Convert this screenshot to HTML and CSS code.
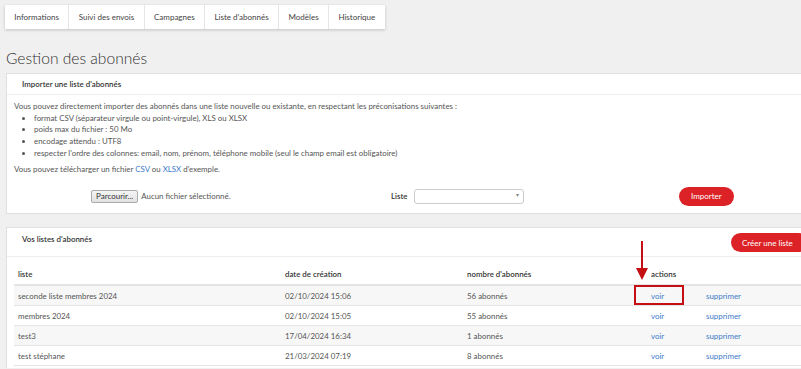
FILE: index.html
```html
<!DOCTYPE html>
<html lang="fr">
<head>
    <meta charset="UTF-8">
    <meta name="viewport" content="width=device-width, initial-scale=1.0">
    <title>Gestion des abonnés</title>
    <link rel="stylesheet" href="styles.css">
</head>
<body>
    <nav class="tabs">
        <a class="tab" href="#">Informations</a>
        <a class="tab" href="#">Suivi des envois</a>
        <a class="tab" href="#">Campagnes</a>
        <a class="tab" href="#">Liste d'abonnés</a>
        <a class="tab" href="#">Modèles</a>
        <a class="tab" href="#">Historique</a>
    </nav>

    <h1>Gestion des abonnés</h1>

    <div class="panel">
        <div class="panel-heading">Importer une liste d'abonnés</div>
        <div class="panel-body">
            <p class="intro">Vous pouvez directement importer des abonnés dans une liste nouvelle ou existante, en respectant les préconisations suivantes :</p>
            <ul class="rules">
                <li>format CSV (séparateur virgule ou point-virgule), XLS ou XLSX</li>
                <li>poids max du fichier : 50 Mo</li>
                <li>encodage attendu : UTF8</li>
                <li>respecter l'ordre des colonnes: email, nom, prénom, téléphone mobile (seul le champ email est obligatoire)</li>
            </ul>
            <p class="sample">Vous pouvez télécharger un fichier <a href="#">CSV</a> ou <a href="#">XLSX</a> d'exemple.</p>

            <form class="import-row">
                <div class="file-field">
                    <button type="button" class="file-btn">Parcourir...</button>
                    <span class="file-name">Aucun fichier sélectionné.</span>
                </div>
                <div class="list-field">
                    <label for="liste">Liste</label>
                    <div class="select-box" id="liste"><span class="caret">▾</span></div>
                </div>
                <button type="submit" class="btn-red">Importer</button>
            </form>
        </div>
    </div>

    <div class="panel panel-lists">
        <div class="panel-heading lists-heading">
            <span>Vos listes d'abonnés</span>
            <button type="button" class="btn-red btn-create">Créer une liste</button>
        </div>
        <table class="lists">
            <thead>
                <tr>
                    <th class="col-name">liste</th>
                    <th class="col-date">date de création</th>
                    <th class="col-count">nombre d'abonnés</th>
                    <th colspan="2">actions</th>
                </tr>
            </thead>
            <tbody>
                <tr>
                    <td>seconde liste membres 2024</td>
                    <td>02/10/2024 15:06</td>
                    <td>56 abonnés</td>
                    <td class="col-see"><a href="#">voir</a></td>
                    <td><a href="#">supprimer</a></td>
                </tr>
                <tr>
                    <td>membres 2024</td>
                    <td>02/10/2024 15:05</td>
                    <td>55 abonnés</td>
                    <td class="col-see"><a href="#">voir</a></td>
                    <td><a href="#">supprimer</a></td>
                </tr>
                <tr>
                    <td>test3</td>
                    <td>17/04/2024 16:34</td>
                    <td>1 abonnés</td>
                    <td class="col-see"><a href="#">voir</a></td>
                    <td><a href="#">supprimer</a></td>
                </tr>
                <tr>
                    <td>test stéphane</td>
                    <td>21/03/2024 07:19</td>
                    <td>8 abonnés</td>
                    <td class="col-see"><a href="#">voir</a></td>
                    <td><a href="#">supprimer</a></td>
                </tr>
            </tbody>
        </table>
    </div>

    <!-- annotation: arrow pointing at the first "voir" link -->
    <div class="mark-arrow"></div>
    <div class="mark-box"></div>
</body>
</html>
```

FILE: styles.css
```css
html {
    overflow: hidden;
}
body {
    font-family: Lato, "Open Sans", sans-serif;
    font-size: 7.9px;
    color: #555;
    margin: 0;
    padding: 5px 0 0 6px;
    background-color: #f0f0f0;
    position: relative;
    height: 369px;
    box-sizing: border-box;
    overflow: hidden;
}
a {
    color: #3d7cc9;
    text-decoration: none;
}
.tabs {
    display: inline-flex;
    margin-left: -1px;
    background: white;
    box-shadow: 0 1px 3px rgba(0,0,0,0.2);
}
.tab {
    height: 24px;
    line-height: 24px;
    padding: 0 9.5px 0 9.3px;
    font-size: 8px;
    color: #444;
    border-right: 1px solid #e6e6e6;
}
.tab:last-child {
    border-right: none;
}
h1 {
    font-size: 15.6px;
    font-weight: 300;
    color: #333;
    margin: 19px 0 0 0;
    line-height: 20px;
    height: 20px;
}
.panel {
    background: white;
    border: 1px solid #e0e0e0;
    border-right: none;
    margin-top: 5px;
}
.panel-heading {
    height: 20px;
    line-height: 20px;
    padding-left: 15px;
    color: #333;
    font-weight: 600;
    border-bottom: 1px solid #eee;
}
.panel-body {
    padding: 6px 8px 7px 7px;
}
.intro, .sample {
    margin: 0;
    line-height: 11.7px;
}
.rules {
    margin: 0;
    padding-left: 20px;
    line-height: 11.7px;
}
.rules li {
    height: 11.7px;
}
.sample {
    margin-top: 5px;
}
.import-row {
    display: flex;
    align-items: center;
    height: 20px;
    margin-top: 10px;
    padding-left: 77px;
}
.file-field {
    width: 300px;
    display: flex;
    align-items: center;
}
.file-btn {
    font-family: inherit;
    font-size: 8px;
    color: #333;
    height: 13px;
    padding: 0 4px;
    border: 1px solid #aaa;
    border-radius: 2px;
    background: linear-gradient(#f4f4f4, #e2e2e2);
}
.file-name {
    margin-left: 3px;
}
.list-field {
    width: 288px;
    display: flex;
    align-items: center;
}
.list-field label {
    color: #333;
    font-weight: 600;
    margin-right: 6px;
}
.select-box {
    width: 110px;
    height: 15px;
    box-sizing: border-box;
    border: 1px solid #ccc;
    border-radius: 3px;
    position: relative;
}
.caret {
    position: absolute;
    right: 4px;
    top: 1px;
    font-size: 6px;
    color: #888;
}
.btn-red {
    font-family: inherit;
    font-size: 8px;
    color: white;
    background-color: #dc2227;
    border: none;
    border-radius: 10px;
    height: 19px;
    padding: 0 12px;
}
.panel-lists {
    margin-top: 13px;
    overflow: hidden;
    height: 140px;
    border-bottom: none;
}
.lists-heading {
    height: 29px;
    line-height: 12px;
    padding-top: 5px;
    box-sizing: border-box;
    display: flex;
    justify-content: space-between;
    align-items: flex-start;
}
.btn-create {
    width: 77px;
    margin-right: -7px;
    padding: 0 11px;
    text-align: left;
}
.lists {
    border-collapse: collapse;
    margin: 7px 0 0 7px;
    width: 787px;
}
.lists th {
    text-align: left;
    color: #333;
    font-weight: 600;
    height: 20px;
    padding: 0 4px;
    border-bottom: 2px solid #e4e4e4;
}
.lists td {
    height: 19px;
    padding: 0 4px;
    border-bottom: 1px solid #e4e4e4;
}
.lists tbody tr:nth-child(odd) {
    background: #f7f7f7;
}
.col-name {
    width: 259px;
}
.col-date {
    width: 174px;
}
.col-count {
    width: 176px;
}
.col-see {
    width: 47px;
}
.mark-arrow {
    position: absolute;
    left: 641px;
    top: 241px;
    width: 2px;
    height: 28px;
    background: #c40f14;
}
.mark-arrow::after {
    content: "";
    position: absolute;
    left: -5px;
    top: 27px;
    border-left: 6px solid transparent;
    border-right: 6px solid transparent;
    border-top: 12px solid #c40f14;
}
.mark-box {
    position: absolute;
    left: 634px;
    top: 285px;
    width: 46px;
    height: 16px;
    border: 2px solid #c40f14;
}
```
